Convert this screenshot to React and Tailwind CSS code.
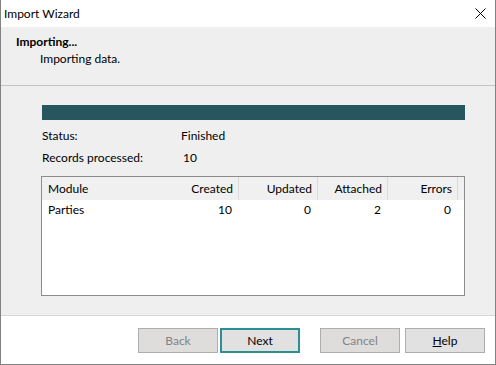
export default function App() {
  const cols = [
    { label: "Created", w: "w-[77px]", v: "10" },
    { label: "Updated", w: "w-[79px]", v: "0" },
    { label: "Attached", w: "w-[70px]", v: "2" },
    { label: "Errors", w: "w-[70px]", v: "0" },
  ];
  return (
    <div className="w-[496px] h-[365px] flex flex-col border-x border-b border-[#828282] bg-white text-[12px] leading-[16px] text-black font-['Lato',Arial,sans-serif] overflow-hidden">
      {/* Title bar */}
      <div className="h-[27px] flex items-center justify-between bg-white pl-[3px] pr-[9px] shrink-0">
        <span>Import Wizard</span>
        <svg width="11" height="11" viewBox="0 0 11 11">
          <path d="M0.5 0.5 L10.5 10.5 M10.5 0.5 L0.5 10.5" stroke="#000" strokeWidth="1" />
        </svg>
      </div>
      {/* Header */}
      <div className="h-[59px] shrink-0 bg-[#efefef] border-b border-[#c4c4c4] pt-[7px] pl-[15px]">
        <div className="font-bold">Importing...</div>
        <div className="pl-[24px] mt-[1px]">Importing data.</div>
      </div>
      {/* Body */}
      <div className="h-[230px] shrink-0 bg-[#efefef] border-b border-[#d6d6d6] pt-[19px] pl-[40px] pr-[29px]">
        <div className="h-[15px] w-[423px] ml-[1px] bg-[#27565f]" />
        <div className="flex mt-[8px] pl-[1px]">
          <span className="w-[139px]">Status:</span>
          <span>Finished</span>
        </div>
        <div className="flex mt-[6px] pl-[1px]">
          <span className="w-[141px]">Records processed:</span>
          <span>10</span>
        </div>
        <div className="mt-[10px] w-[424px] h-[120px] border border-[#8c8c8c] bg-white">
          <div className="flex h-[23px] bg-[#f0f0f0]">
            <div className="w-[120px] flex items-center pl-[6px]">Module</div>
            {cols.map((c) => (
              <div key={c.label} className={`${c.w} flex items-center justify-end pr-[5px] border-r border-[#dadada]`}>
                {c.label}
              </div>
            ))}
          </div>
          <div className="flex h-[18px] pt-[2px]">
            <div className="w-[120px] pl-[6px]">Parties</div>
            {cols.map((c) => (
              <div key={c.label} className={`${c.w} text-right pr-[6px] border-r border-transparent`}>
                {c.v}
              </div>
            ))}
          </div>
        </div>
      </div>
      {/* Footer */}
      <div className="flex-1 bg-white flex justify-end items-start pt-[12px] pr-[10px]">
        <button className="w-[80px] h-[25px] border border-[#adadad] bg-[#dfdcdc] text-[#838383]">Back</button>
        <button className="ml-[2px] w-[80px] h-[25px] border-2 border-[#2b8f94] bg-[#e1e1e1]">Next</button>
        <button className="ml-[20px] w-[80px] h-[25px] border border-[#adadad] bg-[#dfdcdc] text-[#838383]">Cancel</button>
        <button className="ml-[5px] w-[80px] h-[25px] border border-[#adadad] bg-[#e1e1e1]">
          <span className="underline">H</span>elp
        </button>
      </div>
    </div>
  );
}
